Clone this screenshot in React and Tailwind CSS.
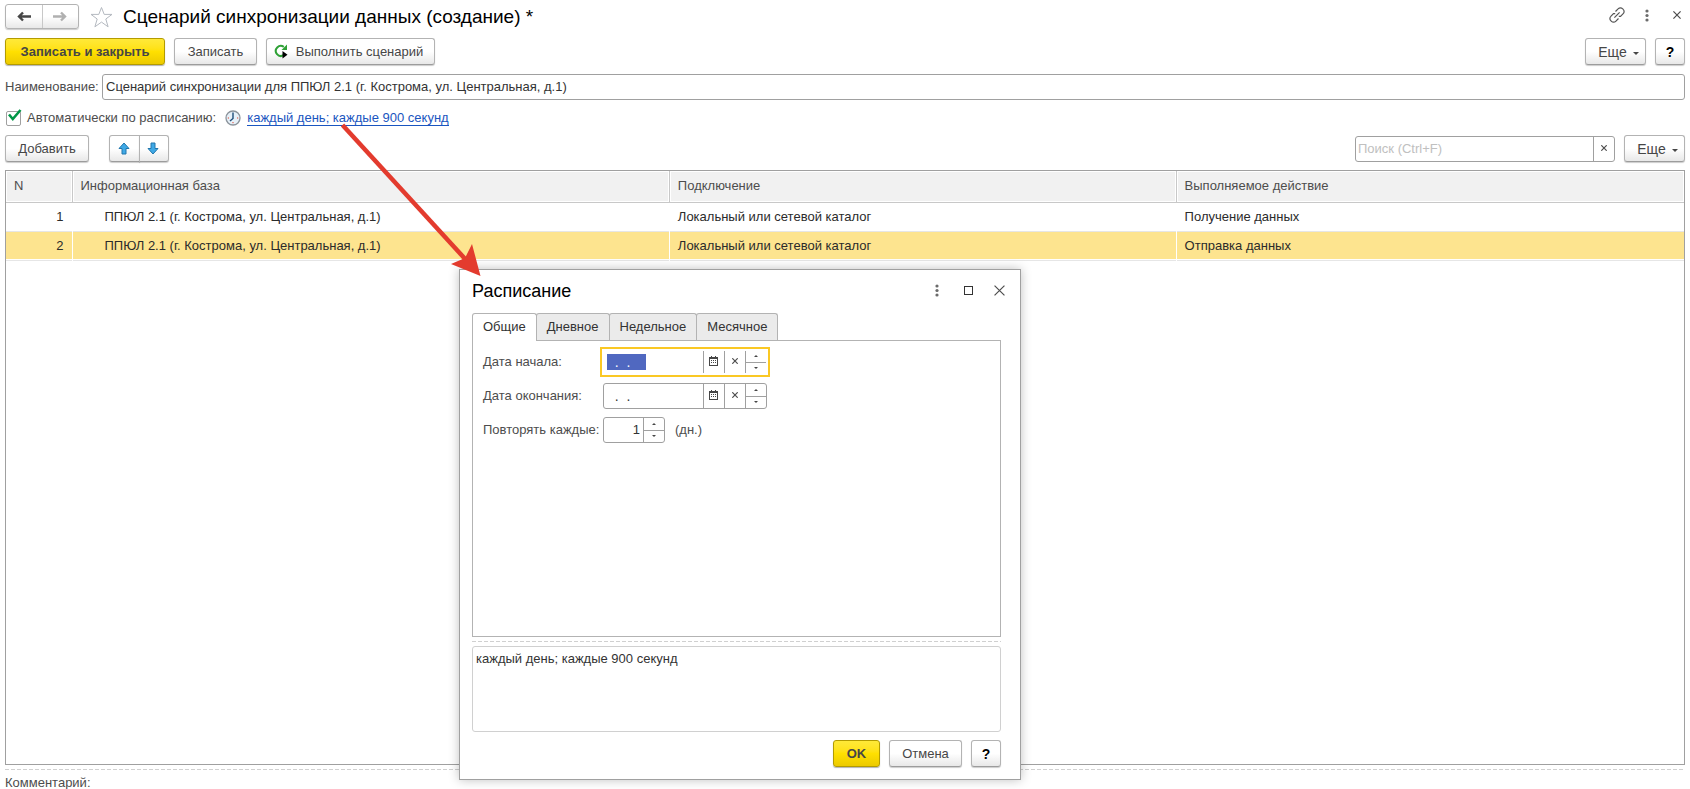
import React, { useEffect, useRef } from 'react';

const ROWS = [
    { n: 1, base: 'ППЮЛ 2.1 (г. Кострома, ул. Центральная, д.1)', link: 'Локальный или сетевой каталог', action: 'Получение данных' },
    { n: 2, base: 'ППЮЛ 2.1 (г. Кострома, ул. Центральная, д.1)', link: 'Локальный или сетевой каталог', action: 'Отправка данных' },
];

const TABS = ['Общие', 'Дневное', 'Недельное', 'Месячное'];

const BTN =
    'flex h-[27px] items-center justify-center rounded-[3px] border border-[#b3b3b3] border-b-[#9c9c9c] bg-linear-to-b from-white from-50% to-[#e8e8e8] text-[#464646] shadow-[0_1px_1px_rgba(0,0,0,0.2)]';
const BTN_YELLOW =
    'flex h-[27px] items-center justify-center rounded-[3px] border border-[#b39b00] bg-linear-to-b from-[#ffe938] via-[#ffe000] to-[#ecca00] font-bold text-[#464646] shadow-[0_1px_1px_rgba(0,0,0,0.3)]';
const TH =
    'border-r border-[#c8c8c8] bg-[#f1f1f1] px-2 font-normal shadow-[inset_0_0_0_1px_#fff] last:border-r-0';
const DASHES = 'h-px bg-[repeating-linear-gradient(90deg,#d0d0d0_0_4px,transparent_4px_6px)]';

function Dots() {
    return (
        <svg width="4" height="13" viewBox="0 0 4 13" fill="#6b6b6b">
            <circle cx="2" cy="2" r="1.6" />
            <circle cx="2" cy="6.5" r="1.6" />
            <circle cx="2" cy="11" r="1.6" />
        </svg>
    );
}

function Cross({ size = 7 }) {
    return (
        <svg width={size} height={size} viewBox="0 0 10 10" stroke="#4d4d4d" strokeWidth={12 / size}>
            <path d="M0.5 0.5 9.5 9.5M9.5 0.5 0.5 9.5" />
        </svg>
    );
}

function MoreButton() {
    return (
        <button type="button" className={`${BTN} w-[61px] gap-[6px] pl-[6px] text-sm`}>
            Еще
            <svg className="mt-1" width="6" height="3" viewBox="0 0 6 3" fill="#464646">
                <path d="M0 0h6L3 3z" />
            </svg>
        </button>
    );
}

function Spinner() {
    return (
        <span className="flex w-[21px] shrink-0 flex-col border-l border-[#a0a0a0]">
            <button type="button" aria-label="Больше" className="flex flex-1 items-center justify-center border-b border-[#a0a0a0]">
                <svg width="4" height="2" viewBox="0 0 4 2" fill="#464646"><path d="M0 2h4L2 0z" /></svg>
            </button>
            <button type="button" aria-label="Меньше" className="flex flex-1 items-center justify-center">
                <svg width="4" height="2" viewBox="0 0 4 2" fill="#464646"><path d="M0 0h4L2 2z" /></svg>
            </button>
        </span>
    );
}

function DateTools() {
    return (
        <>
            <button type="button" aria-label="Выбрать" className="flex w-[21px] shrink-0 items-center justify-center border-l border-[#a0a0a0] pr-px pb-[3px]">
                <svg width="9" height="10" viewBox="0 0 9 10" fill="none" shapeRendering="crispEdges">
                    <path d="M0.5 1.5h8v8h-8z" stroke="#464646" />
                    <path d="M0 1h9v2H0zM2 0h1v2H2zM6 0h1v2H6z" fill="#464646" />
                    <path d="M2 4h1v1H2zM4 4h1v1H4zM6 4h1v1H6zM2 6h1v1H2zM4 6h1v1H4zM6 6h1v1H6z" fill="#464646" />
                </svg>
            </button>
            <button type="button" aria-label="Очистить" className="flex w-[21px] shrink-0 items-center justify-center border-l border-[#a0a0a0] pr-px pb-[2px]">
                <Cross size={6} />
            </button>
            <Spinner />
        </>
    );
}

function ScheduleDialog() {
    const startRef = useRef(null);

    useEffect(() => {
        startRef.current.focus();
        startRef.current.select();
    }, []);

    return (
        <section
            role="dialog"
            aria-labelledby="schedule-title"
            className="absolute top-[269px] left-[459px] w-[562px] border border-[#a0a0a0] bg-white pr-[11px] pb-3 pl-3 shadow-[0_0_10px_rgba(0,0,0,0.25)]"
        >
            <header className="flex h-[43px] items-center gap-[11px] pb-[2px]">
                <h2 id="schedule-title" className="flex-1 text-lg text-black">Расписание</h2>
                <button type="button" aria-label="Меню" className="flex w-5 justify-center"><Dots /></button>
                <button type="button" aria-label="Развернуть" className="flex w-5 justify-center">
                    <span className="size-[9px] border border-[#333]" />
                </button>
                <button type="button" aria-label="Закрыть" className="flex w-5 justify-center"><Cross size={11} /></button>
            </header>

            <div className="mr-2">
                <div role="tablist" className="relative z-10 flex">
                    {TABS.map((tab, i) => (
                        <button
                            key={tab}
                            type="button"
                            role="tab"
                            aria-selected={i === 0}
                            className={
                                i === 0
                                    ? 'h-7 rounded-t-[3px] border border-b-0 border-[#b3b3b3] bg-white px-[10px] pb-[2px] text-[#333]'
                                    : '-ml-px h-[27px] rounded-t-[3px] border border-b-0 border-[#b3b3b3] bg-[#ebebeb] px-[10px] pb-px text-[#333]'
                            }
                        >
                            {tab}
                        </button>
                    ))}
                </div>

                <div role="tabpanel" className="-mt-px flex h-[297px] flex-col gap-2 border border-[#b3b3b3] px-[10px] pt-2">
                    <div className="flex h-[26px] items-center">
                        <label htmlFor="date-start" className="w-[120px] text-[#4d4d4d]">Дата начала:</label>
                        <div className="-ml-[3px] flex h-[30px] w-[170px] border-2 border-[#fac824] p-[2px]">
                            <input
                                id="date-start"
                                ref={startRef}
                                defaultValue={'  .  .    '}
                                className="min-w-0 flex-1 px-[3px] text-sm leading-4 text-[#333] caret-transparent outline-none selection:bg-[#5068c0] selection:text-white"
                            />
                            <DateTools />
                        </div>
                    </div>
                    <div className="flex h-[26px] items-center">
                        <label htmlFor="date-end" className="w-[120px] text-[#4d4d4d]">Дата окончания:</label>
                        <div className="flex h-[26px] w-[164px] rounded-[3px] border border-[#a0a0a0]">
                            <input
                                id="date-end"
                                defaultValue={'  .  .    '}
                                className="min-w-0 flex-1 px-[3px] text-sm leading-4 text-[#333] outline-none"
                            />
                            <DateTools />
                        </div>
                    </div>
                    <div className="flex h-[26px] items-center">
                        <label htmlFor="repeat" className="w-[120px] text-[#4d4d4d]">Повторять каждые:</label>
                        <div className="flex h-[26px] w-[62px] rounded-[3px] border border-[#a0a0a0]">
                            <input id="repeat" defaultValue="1" className="min-w-0 flex-1 px-[3px] text-right text-[#333] outline-none" />
                            <Spinner />
                        </div>
                        <span className="ml-[10px] text-[#4d4d4d]">(дн.)</span>
                    </div>
                </div>

                <div className={`${DASHES} my-1`} />

                <textarea
                    aria-label="Описание расписания"
                    readOnly
                    defaultValue="каждый день; каждые 900 секунд"
                    className="block h-[86px] w-full resize-none rounded-[3px] border border-[#d0d0d0] px-[3px] py-1 text-[#333] outline-none"
                />

                <footer className="mt-2 flex justify-end gap-[9px]">
                    <button type="button" className={`${BTN_YELLOW} w-[47px]`}>OK</button>
                    <button type="button" className={`${BTN} w-[73px]`}>Отмена</button>
                    <button type="button" className={`${BTN} w-[30px] text-sm`}>
                        <b className="text-black">?</b>
                    </button>
                </footer>
            </div>
        </section>
    );
}

export default function App() {
    return (
        <main className="relative flex min-h-screen flex-col overflow-hidden bg-white px-[5px] pt-1 font-['Liberation_Sans',Arial,sans-serif] text-[13px] leading-4 text-[#333]">
            <header className="flex h-[25px] items-center">
                <div className="flex h-[25px] w-[74px] rounded-[3px] border border-[#b3b3b3] bg-linear-to-b from-white from-50% to-[#e8e8e8] shadow-[0_1px_1px_rgba(0,0,0,0.2)]">
                    <button type="button" aria-label="Назад" className="flex flex-1 items-center justify-center">
                        <svg width="14" height="11" viewBox="0 0 14 11" fill="none" stroke="#464646" strokeWidth="2.4">
                            <path d="M14 5.5H2M6 1.5 2 5.5 6 9.5" />
                        </svg>
                    </button>
                    <button type="button" aria-label="Вперед" className="flex flex-1 items-center justify-center border-l border-[#c8c8c8]">
                        <svg width="14" height="11" viewBox="0 0 14 11" fill="none" stroke="#b0b0b0" strokeWidth="2.4">
                            <path d="M0 5.5h12M8 1.5 12 5.5 8 9.5" />
                        </svg>
                    </button>
                </div>
                <button type="button" aria-label="В избранное" className="ml-[11px]">
                    <svg width="23" height="22" viewBox="0 0 23 22" fill="none" stroke="#b4b9c0">
                        <path d="M11.5 1.5 14.2 8.4H22L15.8 13l2.3 7.8-6.6-4.7-6.6 4.7L7.2 13 1 8.4h7.8z" />
                    </svg>
                </button>
                <h1 className="ml-[10px] flex-1 text-[19px] leading-6 text-black">Сценарий синхронизации данных (создание) *</h1>
                <div className="flex items-center pb-[3px]">
                    <button type="button" aria-label="Получить ссылку" className="mr-5">
                        <svg width="16" height="16" viewBox="0 0 16 16" fill="none" stroke="#555" strokeWidth="1.2">
                            <path d="M6.5 4.5 9.3 1.7a2.9 2.9 0 0 1 4.2 0l.7.7a2.9 2.9 0 0 1 0 4.2L11.5 9.3 9.8 9.4M9.5 11.5l-2.8 2.8a2.9 2.9 0 0 1-4.2 0l-.7-.7a2.9 2.9 0 0 1 0-4.2l2.7-2.7 1.7-.1M5.4 10.6l5.2-5.2" />
                        </svg>
                    </button>
                    <button type="button" aria-label="Меню" className="mr-6"><Dots /></button>
                    <button type="button" aria-label="Закрыть" className="mr-1"><Cross size={8} /></button>
                </div>
            </header>

            <div className="mt-[9px] flex gap-[9px]">
                <button type="button" className={`${BTN_YELLOW} w-[160px]`}>Записать и закрыть</button>
                <button type="button" className={`${BTN} w-[83px]`}>Записать</button>
                <button type="button" className={`${BTN} w-[169px] gap-[7px] pr-1`}>
                    <svg width="15" height="15" viewBox="0 0 15 15" fill="none">
                        <path d="M9.5 11.2A5 5 0 1 1 9.8 2.9" stroke="#2fa136" strokeWidth="2" />
                        <path d="M7.5 6h5.5V0.5z" fill="#2fa136" />
                        <path d="M8.5 7v7.5L13.5 10.8z" fill="#000" />
                    </svg>
                    Выполнить сценарий
                </button>
                <div className="ml-auto flex gap-[9px]">
                    <MoreButton />
                    <button type="button" className={`${BTN} w-[30px] text-sm`}>
                        <b className="text-black">?</b>
                    </button>
                </div>
            </div>

            <div className="mt-[9px] flex h-[26px] items-center">
                <label htmlFor="name" className="w-[97px] text-[#4d4d4d]">Наименование:</label>
                <input
                    id="name"
                    defaultValue="Сценарий синхронизации для ППЮЛ 2.1 (г. Кострома, ул. Центральная, д.1)"
                    className="h-[26px] min-w-0 flex-1 rounded-[3px] border border-[#a0a0a0] px-[3px] pb-px text-[#333] outline-none"
                />
            </div>

            <div className="mt-2 flex h-5 items-center">
                <label className="relative flex items-center gap-[6px] pl-px text-[#4d4d4d]">
                    <input type="checkbox" defaultChecked className="size-[15px] appearance-none rounded-[2px] border border-[#a0a0a0]" />
                    <svg className="pointer-events-none absolute -top-px left-[3px]" width="14" height="13" viewBox="0 0 14 13" fill="none" stroke="#009646" strokeWidth="2.6">
                        <path d="M1 5.5 4.8 10 12.5 1" />
                    </svg>
                    Автоматически по расписанию:
                </label>
                <svg className="ml-[9px]" width="16" height="16" viewBox="0 0 16 16" fill="none">
                    <circle cx="8" cy="8" r="7" fill="#e6f0f8" stroke="#8b939b" strokeWidth="1.3" />
                    <path d="M8 2.5v6L5 11" stroke="#1f4e7a" strokeWidth="1.4" />
                    <path d="M12 8h1.2M2.8 8H4M8 13.2V12" stroke="#e0442e" />
                </svg>
                <a href="#schedule" className="ml-[6px] border-b border-[#1a55c0] leading-[14px] text-[#1a55c0]">каждый день; каждые 900 секунд</a>
            </div>

            <div className="mt-[7px] flex items-center">
                <button type="button" className={`${BTN} w-[84px]`}>Добавить</button>
                <div className="ml-5 flex">
                    <button type="button" aria-label="Вверх" className={`${BTN} w-[31px] rounded-r-none pr-[2px]`}>
                        <svg width="12" height="13" viewBox="0 0 12 13" fill="#3fa9e6" stroke="#2277ad">
                            <path d="M6 1 11 6.5H8V12H4V6.5H1z" />
                        </svg>
                    </button>
                    <button type="button" aria-label="Вниз" className={`${BTN} -ml-px w-[30px] rounded-l-none pr-[2px]`}>
                        <svg width="12" height="13" viewBox="0 0 12 13" fill="#3fa9e6" stroke="#2277ad">
                            <path d="M6 12 1 6.5h3V1h4v5.5h3z" />
                        </svg>
                    </button>
                </div>
                <div className="ml-auto flex h-[26px] w-[260px] rounded-[3px] border border-[#a0a0a0]">
                    <input aria-label="Поиск" placeholder="Поиск (Ctrl+F)" className="min-w-0 flex-1 px-[2px] outline-none placeholder:text-[#c0c0c0]" />
                    <button type="button" aria-label="Очистить поиск" className="flex w-[21px] items-center justify-center border-l border-[#a0a0a0] pb-[2px]">
                        <Cross size={6} />
                    </button>
                </div>
                <div className="ml-[9px]"><MoreButton /></div>
            </div>

            <div className="mt-2 flex-1 border border-[#a0a0a0]">
                <table className="w-full table-fixed border-collapse text-left">
                    <thead className="text-[#4d4d4d]">
                        <tr className="h-[31px] border-b border-[#c8c8c8]">
                            <th className={`${TH} w-[66px]`}>N</th>
                            <th className={`${TH} w-[35.6%]`}>Информационная база</th>
                            <th className={`${TH} w-[30.2%]`}>Подключение</th>
                            <th className={TH}>Выполняемое действие</th>
                        </tr>
                    </thead>
                    <tbody className="text-[#2b2b2b]">
                        {ROWS.map((row) => (
                            <tr
                                key={row.n}
                                className={
                                    row.n === 2
                                        ? 'h-[29px] border-b border-[#e6e6e6] bg-[#fde48f] shadow-[inset_0_1px_0_#fff,inset_0_-1px_0_#fff]'
                                        : 'h-[29px] border-b border-[#e6e6e6]'
                                }
                            >
                                <td className="border-r border-white pr-2 text-right">{row.n}</td>
                                <td className="border-r border-white pr-2 pl-8">{row.base}</td>
                                <td className="border-r border-white px-2">{row.link}</td>
                                <td className="px-2">{row.action}</td>
                            </tr>
                        ))}
                    </tbody>
                </table>
            </div>

            <div className={`${DASHES} mt-1`} />
            <p className="h-[19px] pt-[5px] text-[#4d4d4d]">Комментарий:</p>

            <ScheduleDialog />

            {/* pointer from the schedule link to the dialog */}
            <svg className="pointer-events-none absolute top-[120px] left-[336px]" width="150" height="160" viewBox="0 0 150 160">
                <path d="M6.5 5 131 141" stroke="#e33b2e" strokeWidth="4.5" />
                <path d="M144.500 156 115 144 129 138 136 124z" fill="#e33b2e" />
            </svg>
        </main>
    );
}
